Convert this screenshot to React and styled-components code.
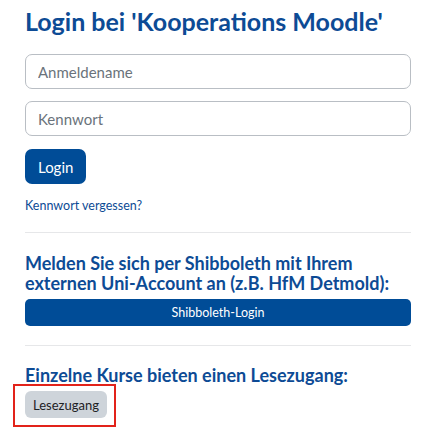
import React from "react";
import styled, { createGlobalStyle } from "styled-components";

const GlobalStyle = createGlobalStyle`
  body {
    margin: 0;
    background: #ffffff;
    font-family: Lato, "Noto Sans", sans-serif;
    color: #1d2125;
  }
`;

const Page = styled.div`
  width: 386px;
  padding: 0 0 0 25px;
  display: flex;
  flex-direction: column;
`;

const Title = styled.h2`
  margin: 6px 0 18px;
  font-size: 25px;
  font-weight: 700;
  line-height: 30px;
  color: #0d4b95;
  white-space: nowrap;
`;

const SubTitle = styled.h3`
  margin: 0 0 ${(p) => p.$bottom ?? 6}px;
  font-size: 18px;
  font-weight: 700;
  line-height: 20px;
  color: #0d4b95;
`;

const Field = styled.input`
  box-sizing: border-box;
  width: 100%;
  height: 35px;
  margin: 0 0 12px;
  padding: 0 12px;
  border: 1px solid #b9bec4;
  border-radius: 7px;
  font-family: inherit;
  font-size: 15px;
  color: #1d2125;
  &::placeholder {
    color: #6a737b;
  }
`;

const Button = styled.button`
  box-sizing: border-box;
  height: ${(p) => p.$height || 35}px;
  width: ${(p) => (p.$block ? "100%" : "auto")};
  margin-top: ${(p) => p.$top || 0}px;
  padding: 0 ${(p) => p.$pad || 12}px;
  border: none;
  border-radius: ${(p) => p.$radius || 7}px;
  background: ${(p) => (p.$secondary ? "#ced4da" : "#004c97")};
  color: ${(p) => (p.$secondary ? "#1d2125" : "#ffffff")};
  font-family: inherit;
  font-size: ${(p) => p.$size || 15}px;
  align-self: ${(p) => (p.$block ? "stretch" : "flex-start")};
`;

const Forgot = styled.a`
  align-self: flex-start;
  margin: 15px 0 0;
  font-size: 12.5px;
  line-height: 14px;
  color: #0d4b95;
  text-decoration: none;
`;

const Rule = styled.hr`
  width: 100%;
  height: 0;
  margin: ${(p) => p.$top}px 0 ${(p) => p.$bottom}px;
  border: none;
  border-top: 1px solid #e6e7e9;
`;

const Highlight = styled.div`
  align-self: flex-start;
  margin: -1px 0 0 -12px;
  padding: 5px 7px 7px 10px;
  border: 2px solid #e2231a;
`;

export default function App() {
  return (
    <>
      <GlobalStyle />
      <Page>
        <Title>Login bei 'Kooperations Moodle'</Title>
        <Field placeholder="Anmeldename" />
        <Field placeholder="Kennwort" type="password" />
        <Button $top={1} $pad={13}>Login</Button>
        <Forgot href="#">Kennwort vergessen?</Forgot>
        <Rule $top={19} $bottom={20} />
        <SubTitle>
          Melden Sie sich per Shibboleth mit Ihrem externen Uni-Account an
          (z.B. HfM Detmold):
        </SubTitle>
        <Button $block $height={27} $size={12.5} $radius={5}>
          Shibboleth-Login
        </Button>
        <Rule $top={19} $bottom={19} />
        <SubTitle $bottom={0}>Einzelne Kurse bieten einen Lesezugang:</SubTitle>
        <Highlight>
          <Button $secondary $height={27} $size={13} $radius={6} $pad={8}>
            Lesezugang
          </Button>
        </Highlight>
      </Page>
    </>
  );
}
